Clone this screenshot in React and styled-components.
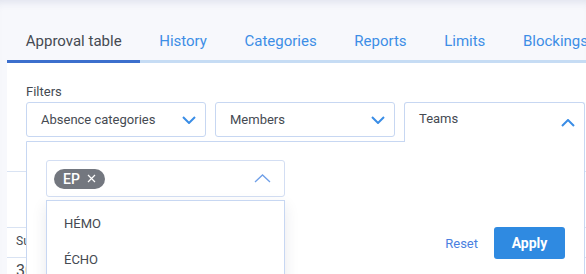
import styled, { createGlobalStyle } from "styled-components";

const GlobalStyle = createGlobalStyle`
  * { box-sizing: border-box; }
  body {
    margin: 0;
    font-family: Roboto, "Liberation Sans", sans-serif;
    background: #f7f8fc;
  }
`;

const Page = styled.div`
  height: 274px;
  overflow: hidden;
  display: flex;
  flex-direction: column;
  background: #f7f8fc;
  box-shadow: inset 0 8px 8px -6px rgba(40, 60, 120, 0.12);
  padding-left: 7px;
`;

const TabBar = styled.div`
  display: flex;
  padding-top: 21px;
  border-bottom: 3px solid #c6dcf4;
  white-space: nowrap;
`;

const Tab = styled.div`
  padding: 0 18.8px;
  display: flex;
  align-items: center;
  font-size: 15px;
  color: ${(p) => (p.$active ? "#454a52" : "#3d8ee6")};
  border-bottom: 3px solid ${(p) => (p.$active ? "#3c6fcd" : "transparent")};
  margin-bottom: -3px;
  height: 42px;
`;

const Panel = styled.div`
  flex: 1;
  background: #fff;
  position: relative;
`;

const Filters = styled.div`
  padding: 21px 0 0 19px;
`;

const Label = styled.div`
  font-size: 13px;
  color: #454a52;
  height: 16px;
  line-height: 16px;
  margin-bottom: 2px;
`;

const FilterRow = styled.div`
  display: flex;
  gap: 9px;
`;

const FilterBox = styled.div`
  position: relative;
  z-index: ${(p) => (p.$open ? 3 : 1)};
  flex: 0 0 ${(p) => (p.$open ? "181px" : "180px")};
  height: ${(p) => (p.$open ? "40px" : "35px")};
  display: flex;
  align-items: ${(p) => (p.$open ? "flex-start" : "center")};
  justify-content: space-between;
  padding: ${(p) => (p.$open ? "8px 9px 0 14px" : "0 9px 0 14px")};
  border: 1px solid #c7d7f2;
  border-bottom: ${(p) => (p.$open ? "none" : "1px solid #c7d7f2")};
  border-radius: ${(p) => (p.$open ? "3px 3px 0 0" : "3px")};
  background: #fff;
  font-size: 13px;
  color: #454a52;
  & > svg {
    margin-top: ${(p) => (p.$open ? "8px" : "0")};
  }
`;

const TableArea = styled.div`
  margin-top: 29px;
  border-top: 1px solid #d9e3f3;
`;

const TableGap = styled.div`
  height: 55px;
`;

const TableRow = styled.div`
  display: flex;
  align-items: center;
  height: ${(p) => p.$h}px;
  border-top: 1px solid #d9e3f3;
  padding-left: 9px;
  padding-bottom: 3px;
  font-size: ${(p) => p.$size}px;
  color: #454a52;
`;

const Popover = styled.div`
  position: absolute;
  z-index: 2;
  top: 78px;
  left: 19px;
  right: 1px;
  height: 160px;
  background: #fff;
  border: 1px solid #c7d7f2;
  border-radius: 0 0 3px 3px;
  padding: 18px 19px 0;
`;

const SelectWrap = styled.div`
  position: relative;
  width: 239px;
`;

const Select = styled.div`
  height: 37px;
  display: flex;
  align-items: center;
  justify-content: space-between;
  padding: 0 13px 0 7px;
  border: 1px solid #d3def3;
  border-radius: 3px;
`;

const Chip = styled.div`
  display: flex;
  align-items: center;
  gap: 7px;
  height: 20px;
  padding: 0 9px;
  border-radius: 10px;
  background: #73777f;
  color: #fff;
  font-size: 14px;
  font-weight: 500;
`;

const Menu = styled.div`
  position: absolute;
  top: 40px;
  left: 0;
  width: 100%;
  height: 120px;
  background: #fff;
  border: 1px solid #c7d7f2;
  box-shadow: 0 6px 14px rgba(30, 40, 70, 0.1);
  padding-top: 4px;
  z-index: 4;
`;

const MenuItem = styled.div`
  height: 36px;
  display: flex;
  align-items: center;
  padding-left: 17px;
  font-size: 13px;
  color: #454a52;
`;

const Footer = styled.div`
  display: flex;
  justify-content: flex-end;
  align-items: center;
  gap: 16px;
  margin-top: 30px;
`;

const ResetLink = styled.span`
  font-size: 13px;
  color: #4a7fe0;
`;

const ApplyButton = styled.button`
  width: 71px;
  height: 32px;
  border: none;
  border-radius: 3px;
  background: #2f8ae1;
  color: #fff;
  font-family: inherit;
  font-size: 14px;
  font-weight: 700;
`;

const Chevron = ({ up, w = 12, h = 6, color = "#3a8de6", stroke = 2 }) => (
  <svg width={w + 2} height={h + 2} viewBox={`-1 -1 ${w + 2} ${h + 2}`}>
    <polyline
      points={up ? `0,${h} ${w / 2},0 ${w},${h}` : `0,0 ${w / 2},${h} ${w},0`}
      fill="none"
      stroke={color}
      strokeWidth={stroke}
    />
  </svg>
);

const tabs = ["Approval table", "History", "Categories", "Reports", "Limits", "Blockings"];

export default function App() {
  return (
    <>
      <GlobalStyle />
      <Page>
        <TabBar>
          {tabs.map((t, i) => (
            <Tab key={t} $active={i === 0}>
              {t}
            </Tab>
          ))}
        </TabBar>
        <Panel>
          <Filters>
            <Label>Filters</Label>
            <FilterRow>
              <FilterBox>
                Absence categories
                <Chevron />
              </FilterBox>
              <FilterBox>
                Members
                <Chevron />
              </FilterBox>
              <FilterBox $open>
                Teams
                <Chevron up />
              </FilterBox>
            </FilterRow>
          </Filters>
          <TableArea>
            <TableGap />
            <TableRow $h={30} $size={12}>Summary</TableRow>
            <TableRow $h={28} $size={16}>30</TableRow>
          </TableArea>
          <Popover>
            <SelectWrap>
              <Select>
                <Chip>
                  EP
                  <svg width="9" height="9" viewBox="0 0 9 9">
                    <path d="M1 1L8 8M8 1L1 8" stroke="#fff" strokeWidth="1.2" />
                  </svg>
                </Chip>
                <Chevron up w={15} h={7} color="#6f9fe8" stroke={1.3} />
              </Select>
              <Menu>
                <MenuItem>HÉMO</MenuItem>
                <MenuItem>ÉCHO</MenuItem>
              </Menu>
            </SelectWrap>
            <Footer>
              <ResetLink>Reset</ResetLink>
              <ApplyButton>Apply</ApplyButton>
            </Footer>
          </Popover>
        </Panel>
      </Page>
    </>
  );
}
